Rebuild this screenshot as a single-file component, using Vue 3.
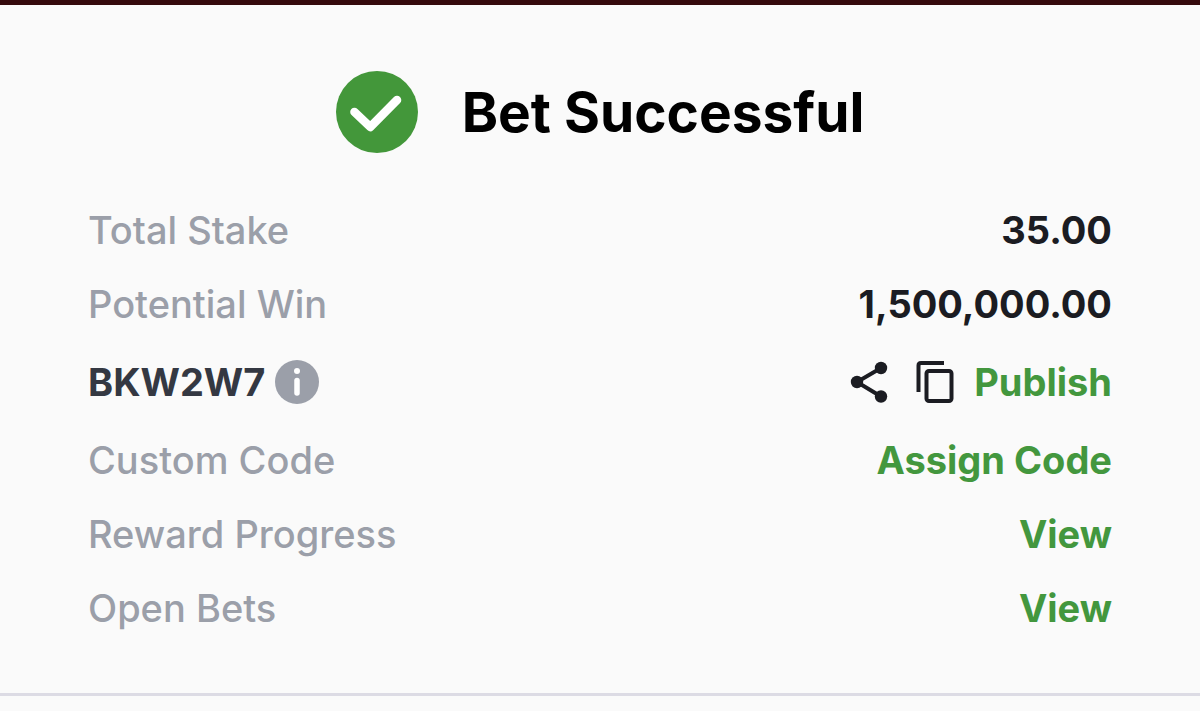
<script setup>
const totals = [
  { label: 'Total Stake', value: '35.00' },
  { label: 'Potential Win', value: '1,500,000.00' },
]
const actions = [
  { label: 'Custom Code', action: 'Assign Code' },
  { label: 'Reward Progress', action: 'View' },
  { label: 'Open Bets', action: 'View' },
]
</script>

<template>
  <main class="receipt">
    <header class="heading">
      <svg class="check" viewBox="0 0 82 82" aria-hidden="true">
        <circle cx="41" cy="41" r="41" fill="#43973a" />
        <path d="M18.500 41 L34.300 56 L61 29" fill="none" stroke="#fff" stroke-width="8.600" stroke-linecap="round" stroke-linejoin="round" />
      </svg>
      <h1>Bet Successful</h1>
    </header>

    <dl class="details">
      <div v-for="row in totals" :key="row.label" class="row">
        <dt>{{ row.label }}</dt>
        <dd>{{ row.value }}</dd>
      </div>
      <div class="row code-row">
        <dt class="code">
          BKW2W7
          <button type="button" class="info" aria-label="Code information">
            <svg viewBox="0 0 44 44" aria-hidden="true">
              <circle cx="22" cy="22" r="22" fill="#9b9fa9" />
              <circle cx="22" cy="11" r="3" fill="#fff" />
              <path d="M22 20.500V33" stroke="#fff" stroke-width="5.500" stroke-linecap="round" />
            </svg>
          </button>
        </dt>
        <dd class="tools">
          <button type="button" class="share" aria-label="Share">
            <svg viewBox="0 0 38 42" aria-hidden="true">
              <path d="M31 7L7 21L31 35.500" fill="none" stroke="#1b1c22" stroke-width="4" />
              <circle cx="31" cy="7" r="6.200" fill="#1b1c22" />
              <circle cx="7" cy="21" r="6.200" fill="#1b1c22" />
              <circle cx="31" cy="35.500" r="6.200" fill="#1b1c22" />
            </svg>
          </button>
          <button type="button" class="copy" aria-label="Copy code">
            <svg viewBox="0 0 38 42" aria-hidden="true" fill="none" stroke="#1b1c22" stroke-width="4">
              <path d="M2.500 31V4.500Q2.500 2 5 2H28" />
              <rect x="10.500" y="10" width="25" height="30" rx="2.500" />
            </svg>
          </button>
          <button type="button" class="link">Publish</button>
        </dd>
      </div>
      <div v-for="row in actions" :key="row.label" class="row">
        <dt>{{ row.label }}</dt>
        <dd><button type="button" class="link">{{ row.action }}</button></dd>
      </div>
    </dl>
  </main>
</template>

<style>
body {
  background: #fafafa;
}
</style>

<style scoped>
.receipt {
  border-top: 5px solid #350a0c;
  border-bottom: 3px solid #dcdbe4;
  padding: 66px 88px 48px;
  font-family: Inter, "Liberation Sans", sans-serif;
  font-size: 38px;
  line-height: 46px;
  color: #1b1c22;
}
.heading {
  display: flex;
  align-items: center;
  justify-content: center;
  gap: 44px;
}
.check {
  width: 82px;
  height: 82px;
}
h1 {
  margin: 0;
  font-size: 55px;
  line-height: 80px;
  font-weight: 700;
  color: #000;
}
.details {
  margin: 40px 0 0;
}
.row {
  display: flex;
  align-items: center;
  justify-content: space-between;
  padding: 14px 0;
}
.code-row {
  padding: 18px 0;
}
dt {
  font-weight: 500;
  color: #9b9fa9;
}
dd {
  margin: 0;
  font-weight: 700;
}
.code {
  display: flex;
  align-items: center;
  gap: 10px;
  font-weight: 700;
  color: #343842;
}
.tools {
  display: flex;
  align-items: center;
}
button {
  display: block;
  border: 0;
  padding: 0;
  background: none;
  font: inherit;
  color: inherit;
  cursor: pointer;
}
button svg {
  display: block;
  width: 100%;
}
.info {
  width: 44px;
}
.share {
  width: 38px;
  margin-right: 28px;
}
.copy {
  width: 38px;
  margin-right: 20px;
}
.link {
  color: #43973e;
}
</style>
